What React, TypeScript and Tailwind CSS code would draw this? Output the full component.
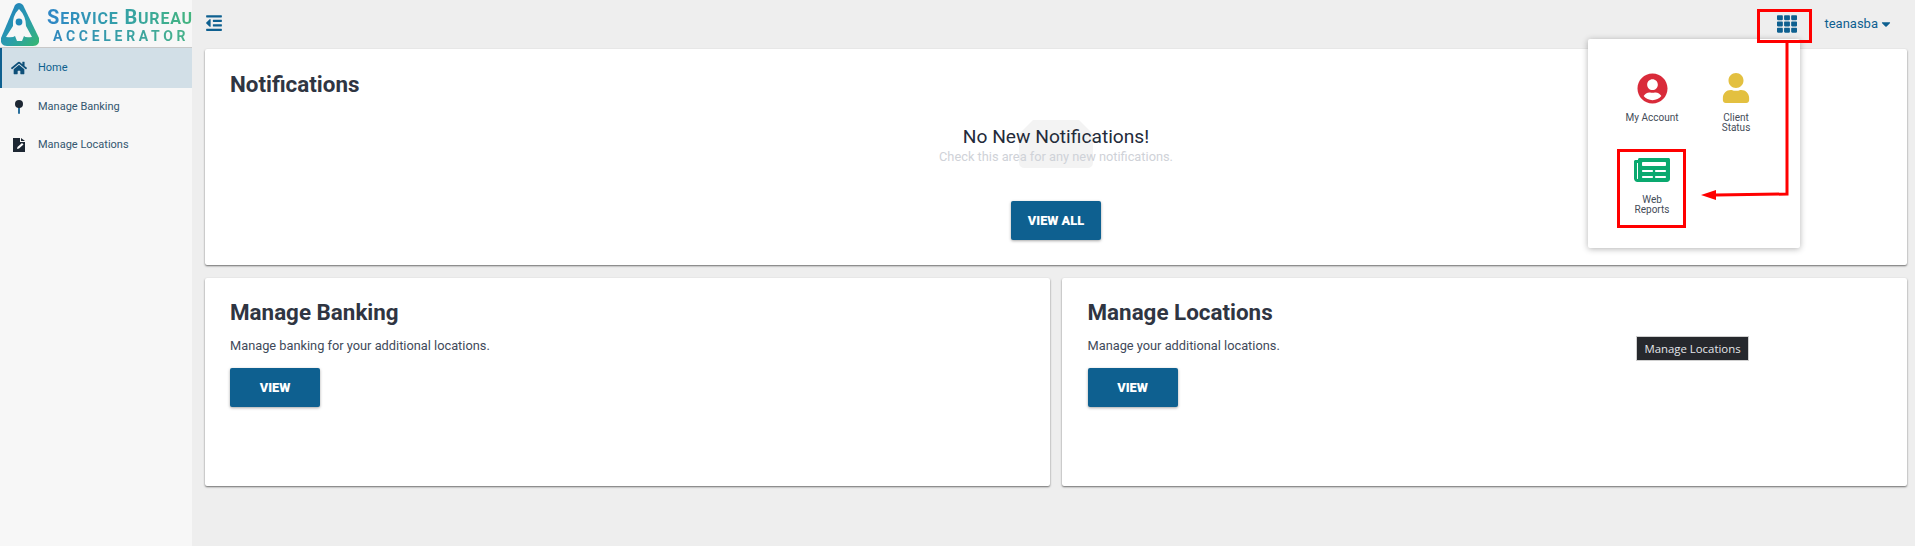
import { FaHome, FaOutdent, FaTh, FaUserCircle, FaUser, FaNewspaper, FaCaretDown } from "react-icons/fa";

function Logo() {
  return (
    <div className="flex h-[48px] items-center border-b border-[#c8c8c8] overflow-hidden">
      <svg width="40" height="46" viewBox="0 0 40 46" className="shrink-0">
        <defs>
          <linearGradient id="lg" x1="0" y1="0" x2="1" y2="1">
            <stop offset="0" stopColor="#1f78c1" />
            <stop offset="0.55" stopColor="#2a9dad" />
            <stop offset="1" stopColor="#37b86e" />
          </linearGradient>
        </defs>
        <path d="M15 4 Q19 0 23 4 L39 37 Q40 45 33 45 L7 45 Q0 45 1 37 Z" fill="url(#lg)" />
        <path d="M19 8 Q26 15 26 25 L32 36 Q25 37 24 35 L22 40 L17 40 L15 35 Q13 37 6 36 L13 25 Q12 15 19 8 Z" fill="#f7f7f7" />
        <circle cx="19" cy="21" r="3.4" fill="#1f88b8" />
      </svg>
      <div className="ml-[7px] mt-[4px] flex flex-col items-start whitespace-nowrap font-['Roboto',sans-serif] font-bold">
        <span className="text-[20px] leading-[20px] tracking-[0.8px] bg-gradient-to-r from-[#2f86c6] via-[#35a0a8] to-[#45b57e] bg-clip-text text-transparent">
          S<span className="text-[16px]">ERVICE</span> B<span className="text-[16px]">UREAU</span>
        </span>
        <span className="ml-[6px] text-[14px] leading-[15px] tracking-[3.7px] bg-gradient-to-r from-[#2f88bd] to-[#48b389] bg-clip-text text-transparent">
          ACCELERATOR
        </span>
      </div>
    </div>
  );
}

function PinIcon() {
  return (
    <svg width="10" height="14" viewBox="0 0 10 14">
      <rect x="4" y="6" width="2" height="8" rx="1" fill="#2a6f9c" />
      <circle cx="5" cy="4" r="4" fill="#1d2733" />
    </svg>
  );
}

function FileIcon() {
  return (
    <svg width="12" height="14" viewBox="0 0 12 14">
      <path d="M0 0 H7 L7 4 H12 V14 H0 Z" fill="#1d2733" />
      <path d="M8 0 L12 3 H8 Z" fill="#1d2733" />
      <path d="M4 11 L4.5 9 L9 5 L10.5 6.4 L6 10.5 Z" fill="#ffffff" />
    </svg>
  );
}

function NavItem({ icon, label, active, h }: { icon: React.ReactNode; label: string; active?: boolean; h: string }) {
  return (
    <div className={`flex items-center ${h} ${active ? "bg-[#d2dfe7] border-l-2 border-[#0e6090] pl-[9px]" : "pl-[11px]"}`}>
      <span className="w-[16px] flex justify-center text-[#0e4f78]">{icon}</span>
      <span className={`ml-[11px] text-[11px] font-['Roboto',sans-serif] ${active ? "text-[#0e5f8e]" : "text-[#33566f]"}`}>{label}</span>
    </div>
  );
}

function Button({ children, w }: { children: React.ReactNode; w: string }) {
  return (
    <div className={`flex h-[39px] ${w} items-center justify-center rounded-[2px] bg-[#0e6090] text-[12.8px] font-black text-white shadow-[0_1px_3px_rgba(0,0,0,0.35)]`}>
      {children}
    </div>
  );
}

function SmallCard({ title, body, pad }: { title: string; body: string; pad: string }) {
  return (
    <div className={`flex-1 h-[208px] rounded-[2px] bg-white ${pad} pt-[20px] shadow-[0_1px_2px_rgba(0,0,0,0.55)]`}>
      <h2 className="text-[22.4px] leading-[28px] font-bold text-[#2f3542]">{title}</h2>
      <p className="mt-[11px] text-[12.8px] leading-[18px] text-[#3f4a5a]">{body}</p>
      <div className="mt-[13px]">
        <Button w="w-[90px]">VIEW</Button>
      </div>
    </div>
  );
}

function AppTile({ icon, label, labelGap }: { icon: React.ReactNode; label: React.ReactNode; labelGap: string }) {
  return (
    <div className="flex w-[84px] flex-col items-center text-center">
      <div className="flex h-[32px] items-center justify-center">{icon}</div>
      <div className={`${labelGap} text-[10px] leading-[10px] text-[#444c58]`}>{label}</div>
    </div>
  );
}

export default function App() {
  return (
    <div className="relative flex h-[546px] w-[1915px] overflow-hidden bg-[#eeeeee] font-['Roboto',sans-serif]">
      <aside className="w-[192px] shrink-0 bg-[#f7f7f7]">
        <Logo />
        <NavItem h="h-[40px]" active icon={<FaHome size={16} />} label="Home" />
        <NavItem h="h-[38px]" icon={<PinIcon />} label="Manage Banking" />
        <NavItem h="h-[38px]" icon={<FileIcon />} label="Manage Locations" />
      </aside>

      <main className="flex-1 min-w-0">
        <header className="flex h-[49px] items-center pl-[13px] pr-[22px]">
          <FaOutdent size={18} className="text-[#0e6090] mt-[-3px]" />
          <div className="ml-auto flex items-center mt-[-2px]">
            <FaTh size={20} className="text-[#0e6090]" />
            <span className="ml-[27px] text-[13px] text-[#0e6090]">teanasba</span>
            <FaCaretDown size={14} className="ml-[1px] text-[#0e6090]" />
          </div>
        </header>

        <div className="flex flex-col gap-[13px] pl-[13px] pr-[8px]">
          <section className="h-[216px] rounded-[2px] bg-white pl-[25px] pr-[25px] pt-[21px] shadow-[0_1px_2px_rgba(0,0,0,0.55)]">
            <h2 className="text-[22.4px] leading-[28px] font-bold text-[#2f3542]">Notifications</h2>
            <div className="relative mt-[26px] flex flex-col items-center">
              <svg width="74" height="48" viewBox="0 0 74 48" className="absolute left-1/2 top-[-4px] -translate-x-1/2">
                <path d="M14 0 H60 L74 14 V42 Q74 48 68 48 H6 Q0 48 0 42 V14 Z" fill="#f3f3f3" />
              </svg>
              <div className="relative text-[19.2px] leading-[26px] text-[#232b3a]">No New Notifications!</div>
              <div className="relative text-[12.8px] leading-[14px] text-[#cfd2d8]">Check this area for any new notifications.</div>
              <div className="relative mt-[37px]">
                <Button w="w-[90px]">VIEW ALL</Button>
              </div>
            </div>
          </section>

          <div className="flex gap-[12px]">
            <SmallCard pad="pl-[25px]" title="Manage Banking" body="Manage banking for your additional locations." />
            <SmallCard pad="pl-[26px]" title="Manage Locations" body="Manage your additional locations." />
          </div>
        </div>
      </main>

      {/* app launcher dropdown */}
      <div className="absolute left-[1588px] top-[39px] h-[209px] w-[212px] rounded-[2px] bg-white pl-[24px] pt-[33px] shadow-[0_1px_6px_rgba(0,0,0,0.3)]">
        <div className="grid grid-cols-[84px_84px] gap-y-[21px] ml-[-2px]">
          <AppTile labelGap="mt-[9px]" icon={<FaUserCircle size={31} className="text-[#d92b3a]" />} label="My Account" />
          <AppTile labelGap="mt-[9px]" icon={<FaUser size={30} className="text-[#e3c040]" />} label={<>Client<br />Status</>} />
          <AppTile labelGap="mt-[9px]" icon={<FaNewspaper size={36} className="text-[#0aa96f]" />} label={<>Web<br />Reports</>} />
        </div>
      </div>

      {/* annotations */}
      <div className="absolute left-[1757px] top-[9px] h-[34px] w-[55px] border-[3px] border-[#ff0000]" />
      <div className="absolute left-[1617px] top-[149px] h-[79px] w-[69px] border-[3px] border-[#ff0000]" />
      <svg className="absolute left-[1700px] top-[42px]" width="92" height="164" viewBox="0 0 92 164">
        <path d="M87 0 V152 L16 153" fill="none" stroke="#ff0000" strokeWidth="3" />
        <path d="M1 153 L16 148 V158 Z" fill="#ff0000" />
      </svg>

      {/* tooltip */}
      <div className="absolute left-[1636px] top-[336px] flex h-[25px] w-[113px] items-center justify-center border border-[#d0d0d0] bg-[#26282d] font-['Open_Sans',sans-serif] text-[11.4px] text-[#e4e6ea]">
        Manage Locations
      </div>
    </div>
  );
}
